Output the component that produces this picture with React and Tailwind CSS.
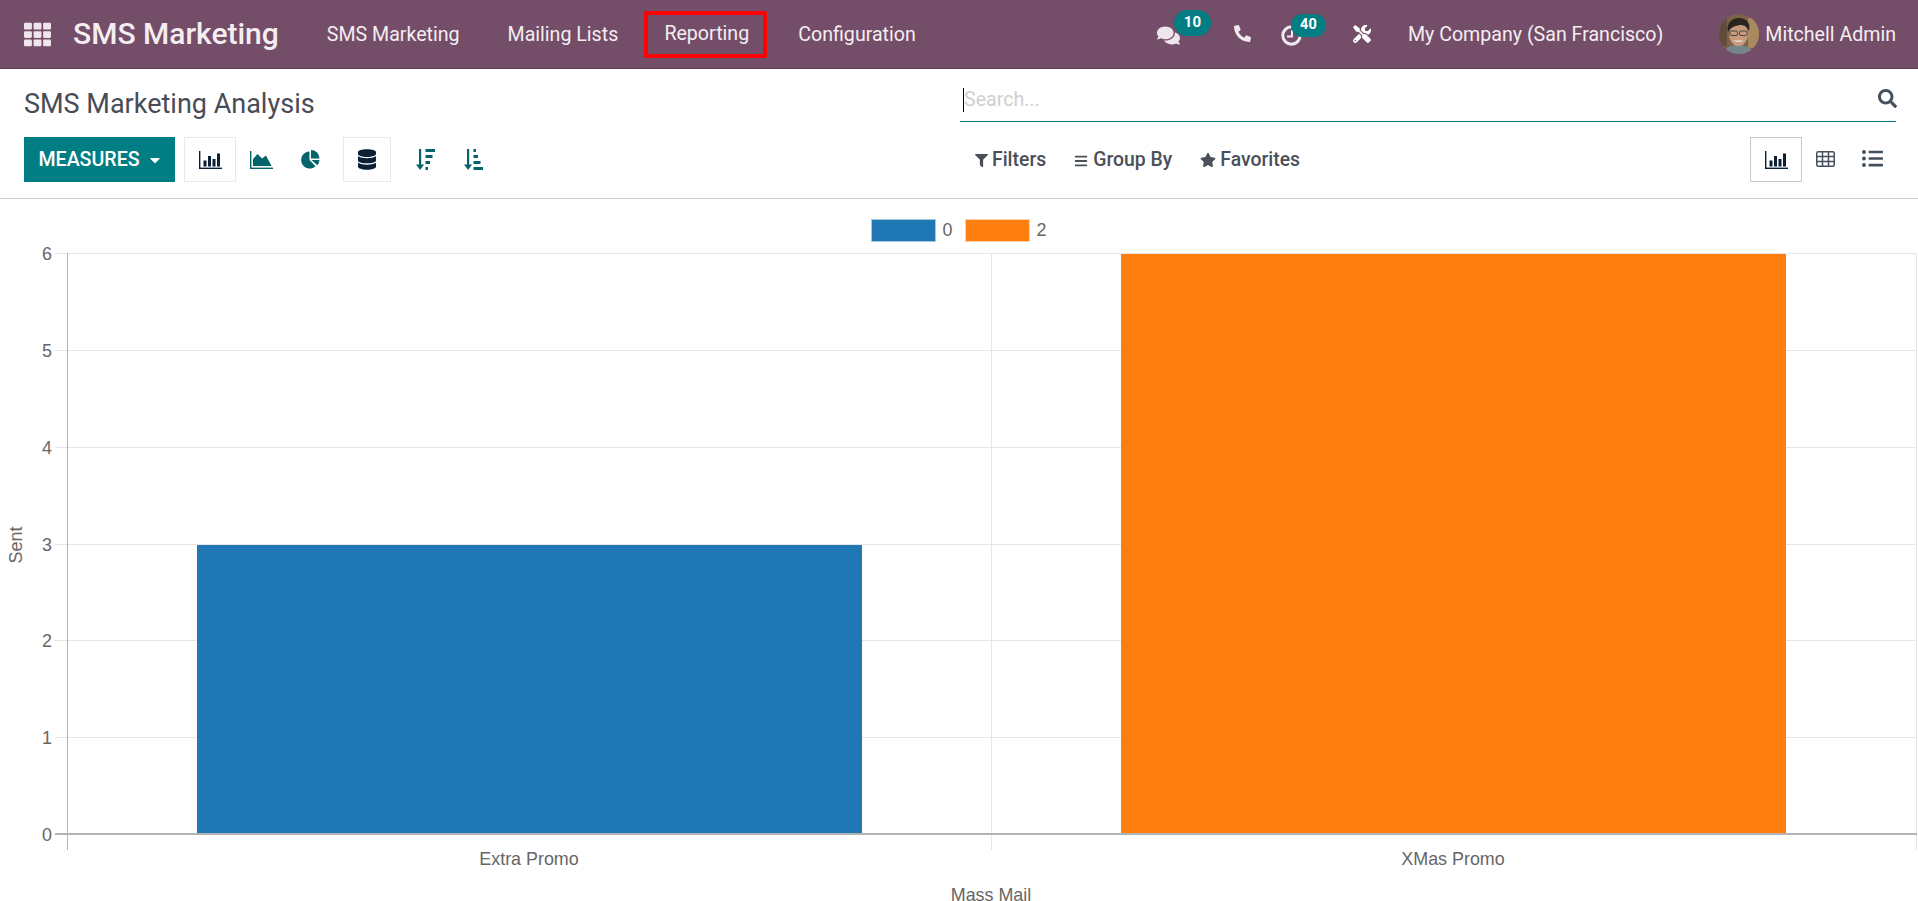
import React from "react";
import {
  FaTh, FaComments, FaPhone, FaTools, FaDatabase, FaFilter, FaBars, FaStar, FaSearch, FaListUl, FaCaretDown,
} from "react-icons/fa";

function Avatar() {
  return (
    <svg viewBox="0 0 40 40" className="w-[40px] h-[40px] rounded-full shrink-0 mr-[6px]">
      <rect width="40" height="40" fill="#7d6247" />
      <rect x="29" y="4" width="11" height="30" fill="#a98a5e" />
      <rect x="0" y="0" width="8" height="32" fill="#5f4d39" />
      <path d="M5 40c1-7 7-9 14-9s14 2 16 9z" fill="#75858a" />
      <ellipse cx="19.5" cy="20" rx="9.5" ry="12" fill="#c79a7e" />
      <path d="M9 18c-2-9 4-14 11-14s12 5 10 13c-2-4-4-6-9-6-5 1-9 2-12 7z" fill="#2a2421" />
      <rect x="11" y="17" width="7.5" height="4.5" rx="1.5" fill="none" stroke="#3a3a3a" strokeWidth="0.9" />
      <rect x="20.5" y="17" width="7.5" height="4.5" rx="1.5" fill="none" stroke="#3a3a3a" strokeWidth="0.9" />
      <path d="M14 26c3 2.5 8 2.5 11 0-2 .8-8 .8-11 0z" fill="#efe8e1" />
    </svg>
  );
}

function BarIcon({ className }) {
  return (
    <svg viewBox="0 0 23 18" className={className} fill="currentColor">
      <rect x="0" y="0" width="1.4" height="18" />
      <rect x="0" y="16.6" width="23" height="1.4" />
      <rect x="4.5" y="9.5" width="3" height="6" />
      <rect x="9" y="5" width="3" height="10.5" />
      <rect x="13.5" y="8" width="3" height="7.5" />
      <rect x="18" y="2.5" width="3" height="13" />
    </svg>
  );
}

function AreaIcon({ className }) {
  return (
    <svg viewBox="0 0 23 18" className={className} fill="currentColor">
      <rect x="0" y="0" width="1.4" height="18" />
      <rect x="0" y="16.6" width="23" height="1.4" />
      <path d="M3 15V8L7.5 3 12 7.5 16 4.5 21.5 15z" />
    </svg>
  );
}

function PieIcon({ className }) {
  return (
    <svg viewBox="0 0 19 19" className={className} fill="currentColor">
      <path d="M8.5 10V1.5A8.5 8.5 0 1 0 14.5 16.2z" />
      <path d="M10 0A8.5 8.5 0 0 1 18.5 8.5H10z" />
      <path d="M10.5 10H18.5A8.5 8.5 0 0 1 16.3 15.2z" />
    </svg>
  );
}

function SortIcon({ widths, className }) {
  return (
    <svg viewBox="0 0 19 21" className={className} fill="currentColor">
      <rect x="3" y="0" width="2.2" height="17" />
      <path d="M0 15.5h8.2L4.1 21z" />
      {widths.map((w, i) => (
        <rect key={i} x="9.5" y={i * 6} width={w} height="3" />
      ))}
    </svg>
  );
}

function TableIcon({ className }) {
  return (
    <svg viewBox="0 0 19 16" className={className} fill="none" stroke="currentColor" strokeWidth="1.5">
      <rect x="0.75" y="0.75" width="17.5" height="14.5" rx="1.5" />
      <path d="M6.5 1v14M12.5 1v14M1 5.5h17M1 10.5h17" />
    </svg>
  );
}

function ClockIcon({ className }) {
  return (
    <svg viewBox="0 0 21 21" className={className} fill="none" stroke="currentColor">
      <circle cx="10.5" cy="10.5" r="8.7" strokeWidth="3" />
      <path d="M11 5v6.5H6" strokeWidth="2" />
    </svg>
  );
}

function Badge({ children, className }) {
  return (
    <span className={"absolute flex items-center justify-center rounded-full bg-[#017e84] text-white font-bold " + className}>
      {children}
    </span>
  );
}

function NavBar() {
  return (
    <header className="h-[69px] shrink-0 flex items-center bg-[#744d68] border-b border-[#59404f] text-[#f4eef2]">
      <FaTh className="ml-6 w-[27px] h-[27px] text-[#eee6ec]" />
      <span className="ml-[22px] text-[30px] font-medium leading-none">SMS Marketing</span>
      <nav className="ml-[48px] flex items-center text-[19.6px] pt-[2px]">
        <span>SMS Marketing</span>
        <span className="ml-[48px]">Mailing Lists</span>
        <span className="ml-[26px] w-[123px] h-[47px] flex items-center justify-center pl-[2px] -mt-[2px] border-[4px] border-[#f00] rounded-[2px]">Reporting</span>
        <span className="ml-[31px]">Configuration</span>
      </nav>
      <div className="ml-auto flex items-center mr-[22px] text-[19.6px]">
        <span className="relative flex mr-[54px]">
          <FaComments className="w-[23px] h-[23px] text-[#eee6ec] mt-[2px]" />
          <Badge className="left-[17px] -top-[12px] w-[37px] h-[26px] text-[15px]">10</Badge>
        </span>
        <FaPhone className="w-[17px] h-[17px] mr-[30px] scale-x-[-1] -translate-y-[1px] text-[#f0e9ee]" />
        <span className="relative flex mr-[51px]">
          <ClockIcon className="w-[21px] h-[21px] text-[#f0e9ee] translate-y-[1px]" />
          <Badge className="left-[10px] -top-[10px] w-[35px] h-[23px] text-[14.5px]">40</Badge>
        </span>
        <FaTools className="w-[18px] h-[18px] mr-[37px] text-white" />
        <span className="pt-[2px]">My Company (San Francisco)</span>
        <span className="ml-[56px] flex items-center">
          <Avatar />
          <span className="pt-[1px]">Mitchell Admin</span>
        </span>
      </div>
    </header>
  );
}

function ToolIcon({ boxed, w, children }) {
  return (
    <span className={"flex items-center justify-center h-[45px] " + w + " " + (boxed ? "border border-[#e9e9e9]" : "")}>
      {children}
    </span>
  );
}

function ControlPanel() {
  return (
    <section className="h-[130px] shrink-0 grid grid-cols-[960px_1fr] border-b border-[#cfcdd4] text-[#4a4f59]">
      <div className="flex flex-col pl-6">
        <h1 className="h-[68px] pt-[2px] flex items-center text-[27px] leading-none font-normal text-[#484c56]">SMS Marketing Analysis</h1>
        <div className="flex items-center">
          <button className="w-[151px] h-[45px] flex items-center justify-center gap-[7px] pl-[2px] pt-[1px] bg-[#017e84] text-white text-[19.6px] font-medium">
            MEASURES
            <FaCaretDown className="w-[16px] h-[16px]" />
          </button>
          <div className="ml-[9px] flex items-center text-[#05646a]">
            <ToolIcon boxed w="w-[52px]"><BarIcon className="w-[23px] h-[18px] text-[#0b1f35]" /></ToolIcon>
            <ToolIcon w="w-[50px]"><AreaIcon className="w-[23px] h-[18px]" /></ToolIcon>
            <ToolIcon w="w-[49px]"><PieIcon className="w-[19px] h-[19px]" /></ToolIcon>
            <span className="w-[8px]" />
            <ToolIcon boxed w="w-[48px]"><FaDatabase className="w-[18px] h-[21px] text-[#0b1f35]" /></ToolIcon>
            <span className="w-[10px]" />
            <ToolIcon w="w-[48px]"><SortIcon widths={[9.5, 7, 4.5, 2.5]} className="w-[19px] h-[21px]" /></ToolIcon>
            <ToolIcon w="w-[48px]"><SortIcon widths={[2.5, 4.5, 7, 9.5]} className="w-[19px] h-[21px]" /></ToolIcon>
          </div>
        </div>
      </div>
      <div className="flex flex-col pr-[22px]">
        <div className="h-[53px] flex items-center border-b border-[#017e84]">
          <span className="w-[1px] h-[24px] bg-black mt-[9px] ml-[3px]" />
          <span className="text-[19.6px] text-[#cfcfcf] mt-[9px]">Search...</span>
          <FaSearch className="ml-auto w-[19px] h-[19px] text-[#44505e] mt-[7px] relative left-[1px]" />
        </div>
        <div className="mt-[15px] flex items-center">
          <div className="flex items-center text-[19.4px] font-medium">
            <FaFilter className="ml-[15px] w-[13px] h-[13px] mt-[3px]" />
            <span className="ml-[4px]">Filters</span>
            <FaBars className="ml-[28px] w-[14px] h-[14px] mt-[3px]" />
            <span className="ml-[5px]">Group By</span>
            <FaStar className="ml-[28px] w-[16px] h-[16px] mt-[1px]" />
            <span className="ml-[4px]">Favorites</span>
          </div>
          <div className="ml-auto flex items-center">
            <ToolIcon boxed w="w-[52px] !border-[#c8c8c8]"><BarIcon className="w-[23px] h-[18px] text-[#0b1f35]" /></ToolIcon>
            <ToolIcon w="w-[47px]"><TableIcon className="w-[19px] h-[16px] text-[#44505e] -translate-y-[1px]" /></ToolIcon>
            <ToolIcon w="w-[47px]"><FaListUl className="w-[21px] h-[21px] text-[#44505e] -translate-y-[1px]" /></ToolIcon>
          </div>
        </div>
      </div>
    </section>
  );
}

function Chart() {
  const ys = [
    [253, "6"], [350, "5"], [447, "4"], [544, "3"], [640, "2"], [737, "1"],
  ];
  const label = "font-['Liberation_Sans',Arial,sans-serif] text-[17.9px]";
  return (
    <svg viewBox="0 199 1918 702" className="block w-[1918px] h-[702px]">
      {ys.map(([y]) => (
        <line key={y} x1="55" x2="1916" y1={y + 0.5} y2={y + 0.5} stroke="#e6e6e6" />
      ))}
      <line x1="991.5" x2="991.5" y1="253" y2="850" stroke="#e6e6e6" />
      <line x1="1916.5" x2="1916.5" y1="253" y2="850" stroke="#e6e6e6" />
      <rect x="197" y="545" width="665" height="289" fill="#1f77b4" />
      <rect x="1121" y="254" width="665" height="580" fill="#ff7f0e" />
      <line x1="67.5" x2="67.5" y1="253" y2="850" stroke="#b3b3b3" />
      <line x1="55" x2="1917" y1="834" y2="834" stroke="#b3b3b3" strokeWidth="2" />
      {[...ys, [834, "0"]].map(([y, t]) => (
        <text key={t} x="52" y={y + 6.5} textAnchor="end" fill="#666" className={label}>{t}</text>
      ))}
      <text x="529" y="865" textAnchor="middle" fill="#666" className={label}>Extra Promo</text>
      <text x="1453" y="865" textAnchor="middle" fill="#666" className={label}>XMas Promo</text>
      <text x="991" y="901" textAnchor="middle" fill="#666" className={label}>Mass Mail</text>
      <text transform="translate(22 545) rotate(-90)" textAnchor="middle" fill="#666" className={label}>Sent</text>
      <rect x="871.5" y="219.5" width="64" height="22" fill="#1f77b4" stroke="#a5c9e1" />
      <text x="942.5" y="235.5" fill="#666" className={label}>0</text>
      <rect x="965.5" y="219.5" width="64" height="22" fill="#ff7f0e" stroke="#ffd3ab" />
      <text x="1036.5" y="235.5" fill="#666" className={label}>2</text>
    </svg>
  );
}

export default function App() {
  return (
    <div className="w-[1918px] h-[901px] overflow-hidden flex flex-col bg-white font-['Roboto',sans-serif]">
      <NavBar />
      <ControlPanel />
      <Chart />
    </div>
  );
}
